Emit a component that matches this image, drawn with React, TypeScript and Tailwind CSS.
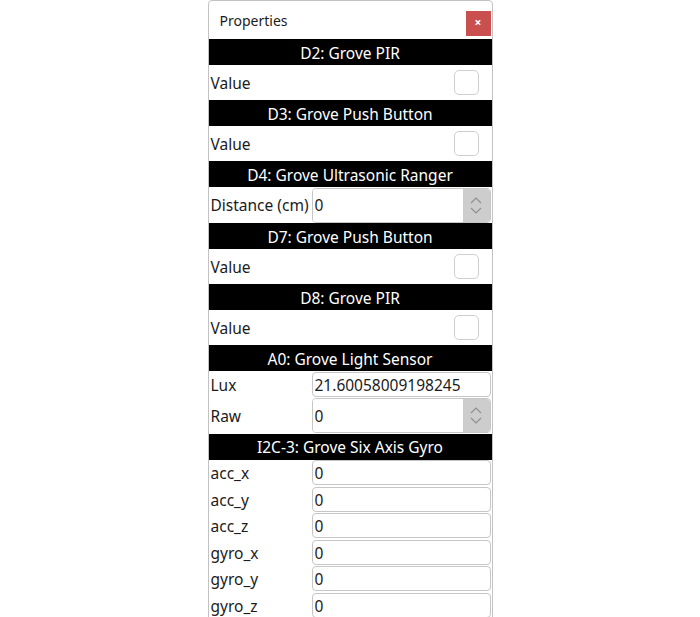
import React from 'react';

type Row =
  | { kind: 'check'; label: string }
  | { kind: 'spin'; label: string; value: string }
  | { kind: 'text'; label: string; value: string };

interface Section {
  title: string;
  rows: Row[];
}

const SECTIONS: Section[] = [
  { title: 'D2: Grove PIR', rows: [{ kind: 'check', label: 'Value' }] },
  { title: 'D3: Grove Push Button', rows: [{ kind: 'check', label: 'Value' }] },
  { title: 'D4: Grove Ultrasonic Ranger', rows: [{ kind: 'spin', label: 'Distance (cm)', value: '0' }] },
  { title: 'D7: Grove Push Button', rows: [{ kind: 'check', label: 'Value' }] },
  { title: 'D8: Grove PIR', rows: [{ kind: 'check', label: 'Value' }] },
  {
    title: 'A0: Grove Light Sensor',
    rows: [
      { kind: 'text', label: 'Lux', value: '21.60058009198245' },
      { kind: 'spin', label: 'Raw', value: '0' },
    ],
  },
  {
    title: 'I2C-3: Grove Six Axis Gyro',
    rows: [
      { kind: 'text', label: 'acc_x', value: '0' },
      { kind: 'text', label: 'acc_y', value: '0' },
      { kind: 'text', label: 'acc_z', value: '0' },
      { kind: 'text', label: 'gyro_x', value: '0' },
      { kind: 'text', label: 'gyro_y', value: '0' },
      { kind: 'text', label: 'gyro_z', value: '0' },
    ],
  },
];

function Spinner() {
  return (
    <div className="w-[27px] h-full bg-[#cdcdcd] rounded-r-[3px] flex flex-col items-center justify-center gap-[3px]">
      <svg width="12" height="7" viewBox="0 0 12 7" fill="none" stroke="#8f8f8f" strokeWidth="1.2">
        <path d="M1 6 L6 1 L11 6" />
      </svg>
      <svg width="12" height="7" viewBox="0 0 12 7" fill="none" stroke="#8f8f8f" strokeWidth="1.2">
        <path d="M1 1 L6 6 L11 1" />
      </svg>
    </div>
  );
}

function PropertyRow({ row }: { row: Row }) {
  if (row.kind === 'check') {
    return (
      <div className="h-[35px] flex items-center justify-between pl-[2px] pr-[13px]">
        <span className="pt-[2px]">{row.label}</span>
        <div className="w-[25px] h-[25px] rounded-[5px] border border-[#cfcfcf] bg-white" />
      </div>
    );
  }
  if (row.kind === 'spin') {
    return (
      <div className="h-[36px] flex items-center">
        <span className="w-[103px] shrink-0 pl-[2px] pt-[2px] whitespace-nowrap">{row.label}</span>
        <div className="flex-1 h-[35px] flex border border-[#c6c6c6] rounded-[4px] mr-[1px] overflow-hidden">
          <div className="flex-1 flex items-center pl-[2px] pt-[2px] bg-white">{row.value}</div>
          <Spinner />
        </div>
      </div>
    );
  }
  return (
    <div className="h-[26.5px] flex items-center">
      <span className="w-[103px] shrink-0 pl-[2px] pt-[2px]">{row.label}</span>
      <div className="flex-1 h-[25px] flex items-center pl-[2px] pt-[2px] border border-[#c6c6c6] rounded-[4px] mr-[1px] bg-white">
        {row.value}
      </div>
    </div>
  );
}

export default function App() {
  return (
    <div
      className="w-[700px] h-[617px] bg-white flex justify-center overflow-hidden text-[15.5px] text-[#1b1b1b]"
      style={{ fontFamily: '"Noto Sans", "Open Sans", sans-serif' }}
    >
      <div className="w-[285px] h-[640px] border border-[#c2c2c2] rounded-t-[4px] flex flex-col shrink-0">
        <div className="h-[38px] flex items-center justify-between pl-[11px] pr-[1px] shrink-0">
          <span className="text-[14px]">Properties</span>
          <button className="w-[25px] h-[25px] bg-[#c9504f] text-white flex items-center justify-center text-[12px] font-bold mt-[6px]">
            ×
          </button>
        </div>
        {SECTIONS.map((s) => (
          <div key={s.title}>
            <div className="h-[26px] pt-[3px] bg-black text-white flex items-center justify-center">{s.title}</div>
            {s.rows.map((r) => (
              <PropertyRow key={r.label} row={r} />
            ))}
          </div>
        ))}
      </div>
    </div>
  );
}
